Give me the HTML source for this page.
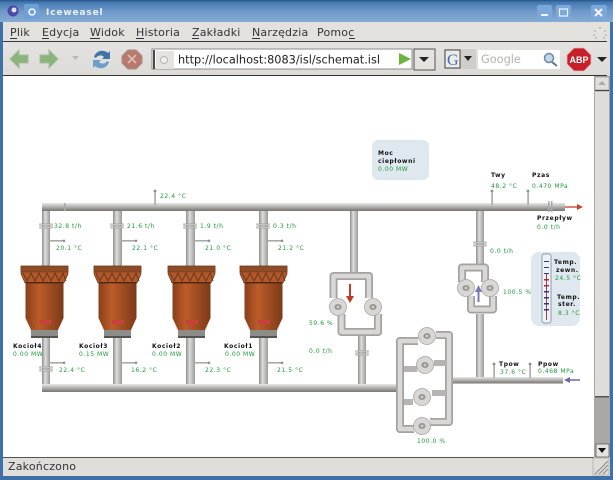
<!DOCTYPE html>
<html><head><meta charset="utf-8"><style>
html,body{margin:0;padding:0;background:#fff}
svg{display:block}
.m{font:11px "DejaVu Sans","Liberation Sans",sans-serif;fill:#333;letter-spacing:.2px}
.t{font:6px "DejaVu Sans",sans-serif;fill:#1d9a3c;letter-spacing:.55px}
.k{font:bold 6px "DejaVu Sans",sans-serif;fill:#111;letter-spacing:.6px}
.o{fill:none;stroke:#a3a29f;stroke-width:8;stroke-linejoin:round}
.i{fill:none;stroke:#d9d8d6;stroke-width:4.5;stroke-linejoin:round}
</style></head><body>
<svg width="613" height="480" viewBox="0 0 613 480" xmlns="http://www.w3.org/2000/svg" style="width:613px;height:480px">
<defs>
<linearGradient id="title" x1="0" y1="0" x2="0" y2="1"><stop offset="0" stop-color="#3a70ab"/><stop offset=".5" stop-color="#6d98c8"/><stop offset="1" stop-color="#86abd4"/></linearGradient>
<linearGradient id="ph" x1="0" y1="0" x2="0" y2="1"><stop offset="0" stop-color="#e8e8e6"/><stop offset=".45" stop-color="#b5b5b2"/><stop offset="1" stop-color="#77736f"/></linearGradient>
<linearGradient id="pv" x1="0" y1="0" x2="1" y2="0"><stop offset="0" stop-color="#8d8d8b"/><stop offset=".4" stop-color="#dedede"/><stop offset="1" stop-color="#9a9a98"/></linearGradient>
<linearGradient id="bo" x1="0" y1="0" x2="1" y2="0"><stop offset="0" stop-color="#87401a"/><stop offset=".35" stop-color="#bd5c2a"/><stop offset="1" stop-color="#7c3a18"/></linearGradient>
<linearGradient id="tool" x1="0" y1="0" x2="0" y2="1"><stop offset="0" stop-color="#e4e3e0"/><stop offset="1" stop-color="#dcdbd8"/></linearGradient>
<g id="boiler">
<path d="M0 0H47V8L43 17H4L0 8Z" fill="#b0592b" stroke="#5f3117" stroke-width=".6"/>
<rect x="0" y="0" width="47" height="6" fill="#8f4a26" stroke="#5f3117" stroke-width=".5"/>
<path d="M2 7l4 8 4-8 4 8 4-8 4 8 4-8 4 8 4-8 4 8 4-8 3 8" fill="none" stroke="#6a3316" stroke-width=".9"/>
<path d="M4.500 17H42.500V52L37 64H10L4.500 52Z" fill="url(#bo)"/>
<rect x="4.500" y="16" width="38" height="1.400" fill="#4f2610"/>
<rect x="18" y="54" width="12" height="4" fill="#c8413c"/>
<rect x="10" y="64" width="27" height="6.500" fill="#8c8c88"/>
<rect x="10" y="70" width="27" height="2" fill="#55534f"/>
</g>
<g id="pump">
<circle r="8.500" fill="#d9d6d3" stroke="#a8a6a3" stroke-width=".8"/>
<ellipse rx="3.600" ry="3" fill="#9a9895"/><circle r="1.300" fill="#cfcdca"/>
</g>
<g id="fl"><rect x="-6.500" y="-2.200" width="13" height="1.600" fill="#c4c4c1" stroke="#8b8b88" stroke-width=".3"/><rect x="-6.500" y=".6" width="13" height="1.600" fill="#c4c4c1" stroke="#8b8b88" stroke-width=".3"/></g>
<g id="sen"><rect x="0" y="-1" width="14" height="1.600" fill="#a9a9a6"/><circle cx="15" cy="-.2" r="1.300" fill="#8e8e8c"/></g>
<g id="sup"><rect x="-.7" y="0" width="1.600" height="14" fill="#a9a9a6"/><circle cx="0" cy="0" r="1.400" fill="#8e8e8c"/></g>
</defs>

<!-- window frame -->
<rect width="613" height="480" fill="#3f70a8"/>
<rect width="613" height="22" fill="url(#title)"/>
<rect x="3" y="22" width="607" height="454" fill="#e0dfdc"/>
<rect x="0" y="0" width="613" height="1.500" fill="#2e5d92"/>

<!-- title bar -->
<circle cx="13" cy="11" r="5.500" fill="#4a4aa8"/><circle cx="14" cy="10" r="2.500" fill="#e8e4ef"/>
<rect x="24" y="4" width="15" height="15" rx="2" fill="#6e9fd6"/><circle cx="32" cy="12" r="3" fill="none" stroke="#eef4fb" stroke-width="1.600"/>
<text x="46" y="15" style="font:bold 9px 'DejaVu Sans',sans-serif;letter-spacing:.85px" fill="#e9f0f8">Iceweasel</text>
<rect x="537" y="5" width="15" height="15" rx="2" fill="#7ba7da"/><rect x="541" y="14" width="7" height="2" fill="#eef4fb"/>
<rect x="556" y="5" width="15" height="15" rx="2" fill="#7ba7da"/><rect x="559.500" y="9" width="8" height="7" fill="none" stroke="#eef4fb" stroke-width="1.200"/>
<rect x="591" y="5" width="16" height="15" rx="2" fill="#7ba7da"/><path d="M595 9l7 7M602 9l-7 7" stroke="#f4f8fc" stroke-width="2"/>

<!-- menu -->
<rect x="3" y="22" width="607" height="19" fill="#e2e1de"/>
<text class="m" x="10" y="36">Plik</text>
<text class="m" x="42" y="36">Edycja</text>
<text class="m" x="90" y="36">Widok</text>
<text class="m" x="136" y="36">Historia</text>
<text class="m" x="192" y="36">Zakładki</text>
<text class="m" x="252" y="36">Narzędzia</text>
<text class="m" x="317" y="36">Pomoc</text>
<g fill="#333"><rect x="10" y="38" width="7" height="1"/><rect x="42" y="38" width="7" height="1"/><rect x="90" y="38" width="10" height="1"/><rect x="136" y="38" width="8" height="1"/><rect x="192" y="38" width="7" height="1"/><rect x="252" y="38" width="8" height="1"/><rect x="349" y="38" width="6" height="1"/></g>
<g fill="#b9b8b5"><circle cx="600" cy="28" r="1"/><circle cx="595" cy="31" r="1"/><circle cx="605" cy="31" r="1"/><circle cx="594" cy="35" r="1"/><circle cx="606" cy="35" r="1"/><circle cx="596" cy="38" r="1"/><circle cx="604" cy="38" r="1"/></g>
<rect x="3" y="41" width="604" height="1" fill="#3a3a38"/>

<!-- toolbar -->
<rect x="3" y="42" width="607" height="33" fill="url(#tool)"/>
<path d="M10 59l9-9v5h9v8h-9v5z" fill="#8cb27e" stroke="#a3bf99" stroke-width="1"/>
<path d="M58 59l-9-9v5h-9v8h9v5z" fill="#8cb27e" stroke="#a3bf99" stroke-width="1"/>
<path d="M72 56h7l-3.500 4z" fill="#b7b6b3"/>
<path d="M94 57a8.500 8.500 0 0 1 14-4l2-2v8h-8l2-2a5 5 0 0 0-8 1z" fill="#3f74a8"/>
<path d="M109 62a8.500 8.500 0 0 1-14 4l-2 2v-8h8l-2 2a5 5 0 0 0 8-1z" fill="#6d9dc9"/>
<path d="M128 50h8l6 6v7l-6 6h-8l-6-6v-7z" fill="#b67a6e" stroke="#a68f88"/><path d="M128 55l8 8M136 55l-8 8" stroke="#dcbab3" stroke-width="1.800"/>
<rect x="152" y="49" width="260" height="20" fill="#fff" stroke="#8e8d8a"/>
<rect x="153" y="50" width="2" height="19" fill="#4a4a48"/>
<rect x="156" y="51" width="18" height="18" fill="#e4e3e0"/><circle cx="164" cy="60" r="3.500" fill="#eee" stroke="#b5b5b2"/>
<text x="178" y="63.500" style="font:11.300px 'DejaVu Sans','Liberation Sans',sans-serif" fill="#222">http://localhost:8083/isl/schemat.isl</text>
<path d="M399 53l12 6-12 6z" fill="#6cb33f"/>
<rect x="414" y="49" width="21" height="21" fill="#e4e3e0" stroke="#555"/>
<path d="M419 57h10l-5 5z" fill="#222"/>
<rect x="444" y="49" width="32" height="20" fill="#cfcecb"/>
<rect x="445" y="50" width="15" height="18" fill="#ecebe8" stroke="#444"/>
<text x="447" y="65" style="font:16px 'Liberation Serif',serif" fill="#3d6fb0">G</text>
<path d="M464 56h8l-4 5z" fill="#222"/>
<rect x="478" y="50" width="82" height="19" fill="#fff"/>
<text x="481" y="63" style="font:11.300px 'DejaVu Sans',sans-serif" fill="#b3b3b1">Google</text>
<circle cx="549" cy="58" r="4.500" fill="#c4d6e8" stroke="#6c8aa8" stroke-width="1.500"/><path d="M552 62l5 4" stroke="#5d7690" stroke-width="2"/>
<path d="M574 48h10l7 7v9l-7 7h-10l-7-7v-9z" fill="#c8202a" stroke="#e8b5b5" stroke-width=".8"/>
<text x="579" y="63" text-anchor="middle" style="font:bold 9px 'Liberation Sans',sans-serif" fill="#fff">ABP</text>
<path d="M597 57h10l-5 5z" fill="#222"/>
<rect x="3" y="75" width="604" height="1" fill="#33332f"/>

<!-- content -->
<rect x="3" y="76" width="591" height="381" fill="#fff"/>

<!-- pipes -->
<g>
<rect x="42" y="205" width="8" height="62" fill="url(#pv)"/>
<rect x="113" y="210" width="9" height="57" fill="url(#pv)"/>
<rect x="186" y="210" width="9" height="57" fill="url(#pv)"/>
<rect x="259" y="210" width="9" height="57" fill="url(#pv)"/>
<rect x="42" y="338" width="8" height="50" fill="url(#pv)"/>
<rect x="113" y="338" width="9" height="47" fill="url(#pv)"/>
<rect x="186" y="338" width="9" height="47" fill="url(#pv)"/>
<rect x="259" y="338" width="9" height="47" fill="url(#pv)"/>
<rect x="350" y="210" width="8" height="62" fill="url(#pv)"/>
<rect x="358" y="336" width="8" height="48" fill="url(#pv)"/>
<rect x="476" y="210" width="8" height="54" fill="url(#pv)"/>
<rect x="476" y="314" width="8" height="64" fill="url(#pv)"/>
<rect x="42" y="203" width="523" height="8" fill="url(#ph)"/>
<rect x="42" y="384" width="355" height="8" fill="url(#ph)"/>
<rect x="453" y="377" width="110" height="6.500" fill="url(#ph)"/>
</g>
<!-- flanges -->
<g>
<use href="#fl" x="46" y="226"/><use href="#fl" x="117" y="226"/><use href="#fl" x="190" y="226"/><use href="#fl" x="263" y="226"/>
<use href="#fl" x="46" y="369"/><use href="#fl" x="362" y="353"/><use href="#fl" x="480" y="244"/>
<rect x="548" y="201" width="1.500" height="11" fill="#aaa"/><rect x="551" y="201" width="1.500" height="11" fill="#aaa"/>
<rect x="64" y="203" width="1.500" height="8" fill="#aaa"/>
</g>
<!-- sensors -->
<g>
<use href="#sen" x="49" y="241"/><use href="#sen" x="121" y="241"/><use href="#sen" x="194" y="241"/><use href="#sen" x="267" y="241"/>
<use href="#sen" x="49" y="363"/><use href="#sen" x="121" y="363"/><use href="#sen" x="194" y="363"/><use href="#sen" x="267" y="363"/>
<use href="#sup" x="155" y="191"/><use href="#sup" x="492" y="191"/><use href="#sup" x="528" y="191"/>
<use href="#sup" x="494" y="364"/><use href="#sup" x="530" y="364"/>
</g>

<!-- boilers -->
<use href="#boiler" x="21" y="266"/><use href="#boiler" x="94" y="266"/><use href="#boiler" x="168" y="266"/><use href="#boiler" x="240" y="266"/>

<!-- valve group 1 -->
<path class="o" d="M333.500 298V276H369V298"/><path class="i" d="M333.500 298V276H369V298"/>
<path class="o" d="M341.500 314V332H378V314"/><path class="i" d="M341.500 314V332H378V314"/>
<use href="#pump" x="338" y="307"/><use href="#pump" x="373" y="307"/>
<path d="M350 284V298" stroke="#c33b26" stroke-width="2"/><path d="M346 296h8l-4 7z" fill="#c33b26"/>

<!-- valve group 2 -->
<path class="o" d="M462 282V267.500H485V282"/><path class="i" d="M462 282V267.500H485V282"/>
<path class="o" d="M471 296V309.500H493V296"/><path class="i" d="M471 296V309.500H493V296"/>
<use href="#pump" x="466" y="288"/><use href="#pump" x="490" y="288"/>
<path d="M478.500 291V302" stroke="#7a78b8" stroke-width="2"/><path d="M475 292h7l-3.500-7z" fill="#7a78b8"/>

<!-- valve group 3 -->
<path class="o" d="M418 341H400V429H414"/><path class="i" d="M418 341H400V429H414"/>
<path class="o" d="M436 335H449V422H430"/><path class="i" d="M436 335H449V422H430"/>
<path d="M404 369H417M404 402H413M434 363H446M432 393H446" stroke="#b5b4b2" stroke-width="6"/>
<use href="#pump" x="427" y="336"/><use href="#pump" x="425" y="365"/><use href="#pump" x="422" y="397"/><use href="#pump" x="422" y="426"/>

<!-- arrows -->
<path d="M565 207H578" stroke="#c85a3f" stroke-width="1.500"/><path d="M577 204l6 3-6 3z" fill="#c0452b"/>
<path d="M568 380H580" stroke="#6d6aa6" stroke-width="1.500"/><path d="M570 377l-6 3 6 3z" fill="#6d6aa6"/>

<!-- panels -->
<rect x="372" y="140" width="57" height="40" rx="6" fill="#dfe8ee"/>
<rect x="531" y="252" width="49" height="74" rx="8" fill="#dfe8ee"/>
<rect x="542" y="254" width="9" height="69" rx="2" fill="#eef2f5" stroke="#6d7a95" stroke-width=".7"/>
<path d="M546.500 274V320" stroke="#b03a4a" stroke-width="1"/>
<g fill="#2a3f7f"><rect x="544" y="261" width="5" height="1"/><rect x="544" y="267" width="5" height="1"/><rect x="544" y="273" width="5" height="1"/><rect x="544" y="279" width="5" height="1.500" fill="#99344c"/><rect x="544" y="285" width="5" height="1.500" fill="#99344c"/><rect x="544" y="291" width="5" height="1.500"/><rect x="544" y="297" width="5" height="1.500"/><rect x="544" y="303" width="5" height="1.500"/><rect x="544" y="309" width="5" height="1.500"/></g>

<!-- labels -->
<text class="k" x="378" y="155">Moc</text>
<text class="k" x="378" y="163">ciepłowni</text>
<text class="t" x="378" y="171">0.00 MW</text>
<text class="t" x="160" y="198">22.4 °C</text>
<text class="t" x="54" y="228">32.8 t/h</text>
<text class="t" x="127" y="228">21.6 t/h</text>
<text class="t" x="200" y="228">1.9 t/h</text>
<text class="t" x="273" y="228">0.3 t/h</text>
<text class="t" x="56" y="250">20.1 °C</text>
<text class="t" x="132" y="250">22.1 °C</text>
<text class="t" x="205" y="250">21.0 °C</text>
<text class="t" x="278" y="250">21.2 °C</text>
<text class="k" x="13" y="348">Kocioł4</text>
<text class="k" x="79" y="348">Kocioł3</text>
<text class="k" x="152" y="348">Kocioł2</text>
<text class="k" x="224" y="348">Kocioł1</text>
<text class="t" x="13" y="356">0.00 MW</text>
<text class="t" x="79" y="356">0.15 MW</text>
<text class="t" x="152" y="356">0.00 MW</text>
<text class="t" x="225" y="356">0.00 MW</text>
<text class="t" x="59" y="372">22.4 °C</text>
<text class="t" x="131" y="372">16.2 °C</text>
<text class="t" x="205" y="372">22.3 °C</text>
<text class="t" x="277" y="372">21.5 °C</text>
<text class="t" x="309" y="325">59.6 %</text>
<text class="t" x="309" y="353">0.0 t/h</text>
<text class="k" x="491" y="177">Twy</text>
<text class="t" x="491" y="188">48.2 °C</text>
<text class="k" x="532" y="177">Pzas</text>
<text class="t" x="532" y="188">0.470 MPa</text>
<text class="k" x="537" y="220">Przepływ</text>
<text class="t" x="537" y="229">0.0 t/h</text>
<text class="t" x="490" y="253">0.0 t/h</text>
<text class="t" x="503" y="294">100.5 %</text>
<text class="k" x="554" y="264">Temp.</text>
<text class="k" x="556" y="272">zewn.</text>
<text class="t" x="555" y="280">24.5 °C</text>
<text class="k" x="557" y="299">Temp.</text>
<text class="k" x="558" y="306">ster.</text>
<text class="t" x="558" y="315">8.3 °C</text>
<text class="k" x="499" y="366">Tpow</text>
<text class="t" x="500" y="374">37.6 °C</text>
<text class="k" x="538" y="366">Ppow</text>
<text class="t" x="538" y="373">0.468 MPa</text>
<text class="t" x="417" y="443">100.0 %</text>

<!-- scrollbar -->
<rect x="594" y="76" width="16" height="381" fill="#a9a8a5"/>
<rect x="595" y="77" width="14" height="13" fill="#e0dfdc" stroke="#8f8e8b" stroke-width=".6"/>
<path d="M598 85h8l-4-4z" fill="#aaa"/>
<rect x="595" y="90" width="14" height="306" fill="#deddda"/>
<rect x="595" y="90" width="14" height="1.200" fill="#444"/>
<rect x="595" y="396" width="14" height="1.500" fill="#55534f"/>
<rect x="596" y="444" width="13" height="13" fill="#e4e3e0" stroke="#555" stroke-width=".7"/>
<path d="M598 448h8l-4 5z" fill="#111"/>
<rect x="3" y="457" width="591" height="1.500" fill="#55534f"/>

<!-- status bar -->
<rect x="3" y="458" width="607" height="18" fill="#dfdedb"/>
<text x="8" y="470" style="font:11px 'DejaVu Sans','Liberation Sans',sans-serif;letter-spacing:.2px" fill="#333">Zakończono</text>
<rect x="593" y="458" width="16" height="17" fill="#deddda" stroke="#a09f9c" stroke-width=".6"/>
<path d="M595 474l13-13M599 474l9-9M603 474l5-5" stroke="#8a8986" stroke-width="1"/>
<rect x="0" y="476" width="613" height="4" fill="#3f6fa6"/>
</svg>
</body></html>
